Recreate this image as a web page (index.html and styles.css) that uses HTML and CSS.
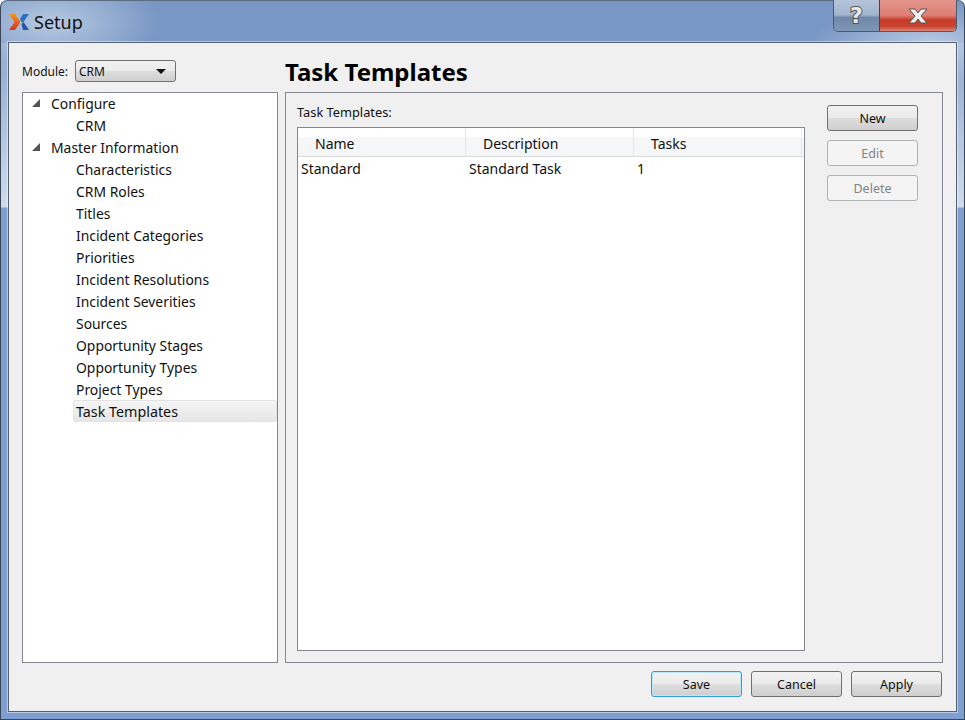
FILE: index.html
```html
<!DOCTYPE html>
<html lang="en">
<head>
    <meta charset="UTF-8">
    <title>Setup</title>
    <link rel="stylesheet" href="styles.css">
</head>
<body>
    <div class="window">
        <div class="titlebar">
            <svg class="logo" width="22" height="16" viewBox="0 0 22 16">
                <defs>
                    <linearGradient id="logo-orange" x1="0" y1="0" x2="0" y2="1">
                        <stop offset="0" stop-color="#f7941d"/>
                        <stop offset="1" stop-color="#d8341f"/>
                    </linearGradient>
                </defs>
                <path d="M1 0h6l5.500 8L7 16H1l5.500-8z" fill="url(#logo-orange)"/>
                <path d="M15 0h6l-5.500 8h-2l-1.500-3z" fill="#2f6fc0"/>
                <path d="M13.500 10l2-2 5.500 8h-6z" fill="#1f57a8"/>
            </svg>
            <span class="title">Setup</span>
            <div class="caption">
                <div class="cap-btn cap-help">?</div>
                <div class="cap-btn cap-close">
                    <svg width="22" height="16" viewBox="0 0 22 16">
                        <path d="M2 1h6l3 4 3-4h6l-6 7 6 7h-6l-3-4-3 4H2l6-7z" fill="#f0f0f0" stroke="#555" stroke-width="1"/>
                    </svg>
                </div>
            </div>
        </div>
        <div class="content">
            <div class="main">
                <div class="left">
                    <div class="module-row">
                        <label class="module-label">Module:</label>
                        <div class="select"><span>CRM</span><i class="select-arrow"></i></div>
                    </div>
                    <div class="tree">
                        <div class="tree-row"><i class="twisty"></i>Configure</div>
                        <div class="tree-row child">CRM</div>
                        <div class="tree-row"><i class="twisty"></i>Master Information</div>
                        <div class="tree-row child">Characteristics</div>
                        <div class="tree-row child">CRM Roles</div>
                        <div class="tree-row child">Titles</div>
                        <div class="tree-row child">Incident Categories</div>
                        <div class="tree-row child">Priorities</div>
                        <div class="tree-row child">Incident Resolutions</div>
                        <div class="tree-row child">Incident Severities</div>
                        <div class="tree-row child">Sources</div>
                        <div class="tree-row child">Opportunity Stages</div>
                        <div class="tree-row child">Opportunity Types</div>
                        <div class="tree-row child">Project Types</div>
                        <div class="tree-row child selected">Task Templates</div>
                    </div>
                </div>
                <div class="right">
                    <h1 class="heading">Task Templates</h1>
                    <div class="panel">
                        <div class="list-col">
                            <div class="list-label">Task Templates:</div>
                            <div class="table">
                                <div class="thead">
                                    <div class="th">Name</div>
                                    <div class="th">Description</div>
                                    <div class="th">Tasks</div>
                                </div>
                                <div class="tr">
                                    <div class="td">Standard</div>
                                    <div class="td">Standard Task</div>
                                    <div class="td">1</div>
                                </div>
                            </div>
                        </div>
                        <div class="side-buttons">
                            <div class="btn">New</div>
                            <div class="btn disabled">Edit</div>
                            <div class="btn disabled">Delete</div>
                        </div>
                    </div>
                </div>
            </div>
            <div class="footer">
                <div class="btn default">Save</div>
                <div class="btn">Cancel</div>
                <div class="btn">Apply</div>
            </div>
        </div>
    </div>
</body>
</html>
```

FILE: styles.css
```css
* {
    box-sizing: border-box;
}
html, body {
    margin: 0;
    height: 100%;
}
body {
    background: #fff;
    font-family: "Noto Sans", sans-serif;
    color: #111;
    overflow: hidden;
}
.window {
    width: 965px;
    height: 720px;
    display: flex;
    flex-direction: column;
    padding: 0 7px 7px 7px;
    border: 1px solid #3a4656;
    border-top-color: #5b6b80;
    border-radius: 7px 7px 0 0;
    background:
        radial-gradient(ellipse 110px 50px at 50px 22px, rgba(205, 218, 236, 0.75), rgba(205, 218, 236, 0) 100%),
        radial-gradient(ellipse 120px 40px at 930px 42px, rgba(200, 214, 234, 0.8), rgba(200, 214, 234, 0) 100%),
        linear-gradient(#7897c4, #7897c4) top / 100% 42px no-repeat,
        linear-gradient(180deg, #8ea8d0 42px, #d0dcec 206px, #7e9fd0 207px, #7e9fd0 100%);
}
.titlebar {
    height: 41px;
    flex: none;
    display: flex;
    align-items: flex-start;
}
.logo {
    margin-top: 13px;
    flex: none;
}
.title {
    margin: 8px 0 0 4px;
    font-size: 18px;
    line-height: 26px;
    color: #111;
}
.caption {
    margin-left: auto;
    margin-top: -1px;
    display: flex;
    height: 32px;
    border: 1px solid #4d5a6b;
    border-top: none;
    border-radius: 0 0 5px 5px;
    overflow: hidden;
}
.cap-btn {
    display: flex;
    align-items: center;
    justify-content: center;
}
.cap-help {
    width: 46px;
    border-right: 1px solid #5e3a38;
    background: linear-gradient(180deg, #b4c4d8 0, #a3b6cf 48%, #6f88a8 56%, #7f97b6 100%);
    font-family: "DejaVu Sans", sans-serif;
    font-weight: bold;
    font-size: 22px;
    color: #e8e8e8;
    -webkit-text-stroke: 2px #555;
    paint-order: stroke fill;
}
.cap-close {
    width: 76px;
    background: linear-gradient(180deg, #e4958b 0, #dc7f73 50%, #c63c26 64%, #c9432f 84%, #dd8272 100%);
}
.content {
    flex: 1;
    display: flex;
    flex-direction: column;
    border: 1px solid #56616f;
    box-shadow: 0 0 0 1px rgba(255, 255, 255, 0.45);
    background: #f0f0f0;
    padding: 0 13px 14px 13px;
    min-height: 0;
}
.main {
    flex: 1;
    display: flex;
    gap: 7px;
    min-height: 0;
}
.left {
    width: 256px;
    flex: none;
    display: flex;
    flex-direction: column;
}
.module-row {
    height: 49px;
    flex: none;
    display: flex;
    align-items: center;
    gap: 7px;
    padding-top: 6px;
}
.module-label {
    font-size: 12px;
    padding-top: 2px;
}
.select {
    width: 101px;
    height: 22px;
    display: flex;
    align-items: center;
    justify-content: space-between;
    padding: 2px 9px 0 3px;
    border: 1px solid #707070;
    border-radius: 3px;
    background: linear-gradient(180deg, #f2f2f2 0, #ebebeb 48%, #dddddd 52%, #cfcfcf 100%);
    font-size: 12px;
}
.select-arrow {
    width: 0;
    height: 0;
    border-left: 5px solid transparent;
    border-right: 5px solid transparent;
    border-top: 5px solid #111;
}
.tree {
    flex: 1;
    background: #fff;
    border: 1px solid #828790;
    font-size: 13.9px;
}
.tree-row {
    height: 22px;
    line-height: 20px;
    padding-top: 1px;
    position: relative;
    padding-left: 28px;
    white-space: nowrap;
}
.tree-row.child {
    padding-left: 53px;
}
.twisty {
    position: absolute;
    left: 9px;
    top: 6px;
    width: 0;
    height: 0;
    border-left: 8px solid transparent;
    border-bottom: 8px solid #555;
}
.tree-row.selected {
    margin: -1px 0 0 50px;
    padding: 0 0 0 2px;
    border: 1px solid #e3e3e3;
    border-radius: 2px;
    line-height: 21px;
    font-size: 14.3px;
    background: linear-gradient(180deg, #f5f5f5 0, #e6e6e6 100%);
}
.right {
    flex: 1;
    display: flex;
    flex-direction: column;
    min-width: 0;
}
.heading {
    margin: 0;
    height: 49px;
    flex: none;
    padding-top: 13px;
    font-size: 24px;
    line-height: 32px;
    font-weight: bold;
    color: #000;
}
.panel {
    flex: 1;
    display: flex;
    border: 1px solid #828790;
    padding: 11px 24px 11px 11px;
    gap: 22px;
    min-height: 0;
}
.list-col {
    width: 508px;
    flex: none;
    display: flex;
    flex-direction: column;
}
.list-label {
    height: 23px;
    line-height: 17px;
    font-size: 12.8px;
    flex: none;
}
.table {
    flex: 1;
    background: #fff;
    border: 1px solid #828790;
    font-size: 14px;
}
.thead {
    display: flex;
    height: 29px;
    background: linear-gradient(180deg, #fff 0, #fff 31%, #f6f7f9 33%, #f4f5f7 100%);
    border-bottom: 1px solid #d8dadc;
    padding-right: 2px;
}
.th {
    width: 168px;
    padding-left: 17px;
    line-height: 32px;
    border-right: 1px solid #e6e8ea;
}
.tr {
    display: flex;
    height: 24px;
}
.td {
    width: 168px;
    padding-left: 3px;
    line-height: 23px;
}
.side-buttons {
    display: flex;
    flex-direction: column;
    gap: 9px;
    padding-top: 1px;
}
.btn {
    width: 91px;
    height: 26px;
    display: flex;
    align-items: center;
    justify-content: center;
    border: 1px solid #707070;
    border-radius: 3px;
    background: linear-gradient(180deg, #f2f2f2 0, #ebebeb 48%, #dddddd 52%, #cfcfcf 100%);
    font-size: 12.5px;
    color: #111;
}
.btn.disabled {
    border-color: #adb2b5;
    background: #f4f4f4;
    color: #838383;
}
.btn.default {
    border-color: #2f9fd8;
    box-shadow: inset 0 0 0 1px #bde6f8;
}
.footer {
    flex: none;
    display: flex;
    justify-content: flex-end;
    gap: 9px;
    padding: 8px 1px 0 0;
}
```
